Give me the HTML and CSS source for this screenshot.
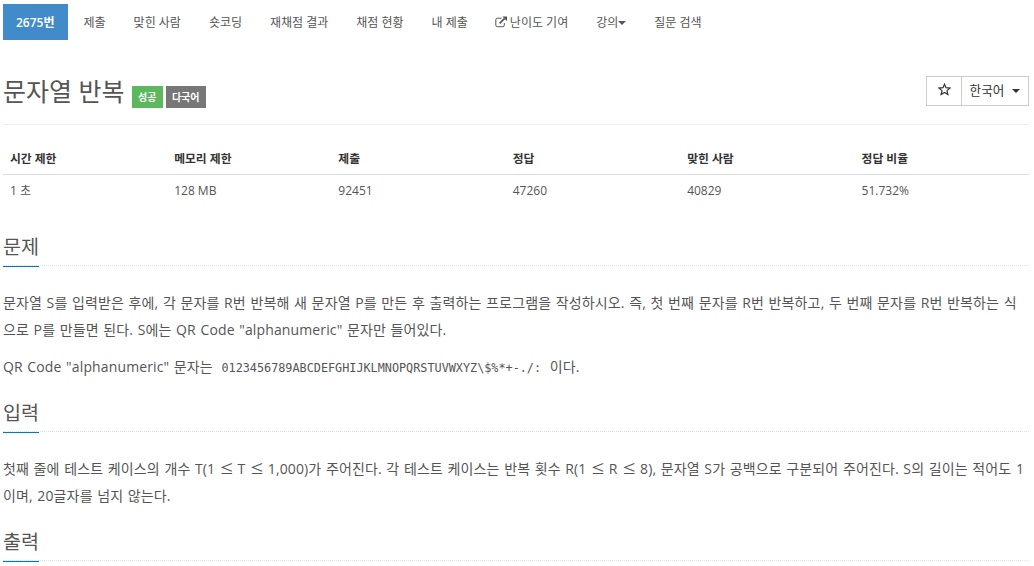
FILE: index.html
```html
<!DOCTYPE html>
<html lang="ko">
<head>
    <meta charset="UTF-8">
    <meta name="viewport" content="width=device-width, initial-scale=1.0">
    <title>2675번: 문자열 반복</title>
    <link rel="stylesheet" href="styles.css">
</head>
<body>
    <ul class="problem-menu">
        <li class="active"><a href="#">2675번</a></li>
        <li><a href="#">제출</a></li>
        <li><a href="#">맞힌 사람</a></li>
        <li><a href="#">숏코딩</a></li>
        <li><a href="#">재채점 결과</a></li>
        <li><a href="#">채점 현황</a></li>
        <li><a href="#">내 제출</a></li>
        <li>
            <a href="#">
                <svg class="icon-link" viewBox="0 0 12 12" width="12" height="12">
                    <path d="M6.500 2.200H2.300Q.8 2.200.8 3.700v5.500q0 1.500 1.500 1.500h5.500q1.500 0 1.500-1.500V7" fill="none" stroke="currentColor"/>
                    <path d="M4.600 7.400L9.600 2.400" fill="none" stroke="currentColor" stroke-width="1.600"/>
                    <path d="M7.400.6H12v4.600z" fill="currentColor"/>
                </svg>
                난이도 기여
            </a>
        </li>
        <li><a href="#">강의<span class="caret"></span></a></li>
        <li><a href="#">질문 검색</a></li>
    </ul>

    <div class="page-header">
        <h1>문자열 반복</h1>
        <span class="tag success">성공</span>
        <span class="tag lang">다국어</span>
        <div class="btn-group">
            <button type="button" class="star">
                <svg viewBox="0 0 13 13" width="13" height="13">
                    <path d="M6.500 1.200l1.500 3.500 3.900.4-2.900 2.500.9 3.900-3.400-2.100-3.400 2.100.9-3.900L1.100 5.100l3.900-.4z" fill="none" stroke="currentColor" stroke-width="1.200"/>
                </svg>
            </button>
            <button type="button" class="language">한국어<span class="caret"></span></button>
        </div>
    </div>

    <table class="problem-info">
        <thead>
            <tr>
                <th class="limit">시간 제한</th>
                <th class="limit">메모리 제한</th>
                <th>제출</th>
                <th>정답</th>
                <th>맞힌 사람</th>
                <th>정답 비율</th>
            </tr>
        </thead>
        <tbody>
            <tr>
                <td>1 초</td>
                <td>128 MB</td>
                <td>92451</td>
                <td>47260</td>
                <td>40829</td>
                <td>51.732%</td>
            </tr>
        </tbody>
    </table>

    <section>
        <div class="headline"><h2>문제</h2></div>
        <p>문자열 S를 입력받은 후에, 각 문자를 R번 반복해 새 문자열 P를 만든 후 출력하는 프로그램을 작성하시오. 즉, 첫 번째 문자를 R번 반복하고, 두 번째 문자를 R번 반복하는 식<br>으로 P를 만들면 된다. S에는 QR Code "alphanumeric" 문자만 들어있다.</p>
        <p>QR Code "alphanumeric" 문자는 <code>0123456789ABCDEFGHIJKLMNOPQRSTUVWXYZ\$%*+-./:</code> 이다.</p>
    </section>

    <section>
        <div class="headline"><h2>입력</h2></div>
        <p>첫째 줄에 테스트 케이스의 개수 T(1 <span class="le">≤</span> T <span class="le">≤</span> 1,000)가 주어진다. 각 테스트 케이스는 반복 횟수 R(1 <span class="le">≤</span> R <span class="le">≤</span> 8), 문자열 S가 공백으로 구분되어 주어진다. S의 길이는 적어도 1<br>이며, 20글자를 넘지 않는다.</p>
    </section>

    <section>
        <div class="headline"><h2>출력</h2></div>
    </section>
</body>
</html>
```

FILE: styles.css
```css
* {
    box-sizing: border-box;
}
body {
    margin: 0;
    padding: 4px 5px 0 3px;
    height: 566px;
    overflow: hidden;
    background-color: #fff;
    color: #555;
    font-family: "Open Sans", "Noto Sans CJK KR", sans-serif;
    font-size: 12px;
}
.problem-menu {
    display: flex;
    gap: 2px;
    margin: 0;
    padding: 0;
    list-style: none;
}
.problem-menu a {
    display: flex;
    align-items: center;
    height: 36px;
    padding: 0 13px;
    color: #555;
    text-decoration: none;
    white-space: nowrap;
}
.problem-menu .active {
    margin-right: 1px;
}
.problem-menu .active a {
    background-color: #428bca;
    color: #fff;
    font-weight: 600;
}
.icon-link {
    margin: 0 3px 0 -1px;
}
.caret {
    display: inline-block;
    border-top: 4px solid currentColor;
    border-left: 4px solid transparent;
    border-right: 4px solid transparent;
}
.problem-menu .caret {
    margin-top: 2px;
}
.page-header {
    display: flex;
    align-items: flex-end;
    height: 85px;
    padding-bottom: 16px;
    border-bottom: 1px solid #eee;
}
h1 {
    margin: 0 7px 0 0;
    font-size: 25px;
    font-weight: 400;
    line-height: 34px;
    color: #555;
}
.tag {
    height: 22px;
    margin-right: 3px;
    padding: 0 6px;
    color: #fff;
    font-size: 10px;
    font-weight: 700;
    line-height: 22px;
}
.success {
    padding: 0 6.5px;
    background-color: #5cb85c;
}
.lang {
    background-color: #777;
}
.btn-group {
    display: flex;
    margin-left: auto;
    margin-bottom: 2px;
}
.btn-group button {
    display: flex;
    align-items: center;
    justify-content: center;
    height: 30px;
    padding: 0 0 3px;
    border: 1px solid #ccc;
    background-color: #fff;
    color: #333;
    font-family: inherit;
    font-size: 12.6px;
}
.btn-group .star {
    width: 36px;
}
.btn-group .language {
    width: 68px;
    margin-left: -1px;
}
.language .caret {
    margin: 3px 0 0 8px;
}
.problem-info {
    width: 100%;
    margin-top: 18px;
    border-collapse: collapse;
    table-layout: fixed;
}
.problem-info th,
.problem-info td {
    height: 32px;
    padding: 0 7px;
    text-align: left;
}
.problem-info th {
    width: 17%;
    height: 31px;
    padding-bottom: 2px;
    border-bottom: 1px solid #ddd;
    color: #333;
    font-size: 11.8px;
    font-weight: 700;
}
.problem-info .limit {
    width: 16%;
}
.headline {
    height: 38px;
    margin-bottom: 23px;
    border-bottom: 1px dotted #dde3ea;
}
.problem-info + section {
    margin-top: 22px;
}
section {
    margin-bottom: 14px;
}
h2 {
    display: inline-block;
    height: 39px;
    margin: 0;
    border-bottom: 1px solid #0078be;
    color: #555;
    font-size: 19.6px;
    font-weight: 400;
    line-height: 38px;
}
p {
    margin: 0 0 10px;
    font-size: 14px;
    line-height: 27px;
    letter-spacing: 0.13px;
    word-spacing: 0.8px;
    white-space: nowrap;
}
section p:last-child {
    margin-bottom: 0;
}
.le {
    margin-right: -0.9px;
    font-family: "Noto Sans CJK KR", sans-serif;
    line-height: 1;
}
code {
    padding: 0 4px;
    font-family: "DejaVu Sans Mono", monospace;
    font-size: 11.8px;
    letter-spacing: 0;
    line-height: 1;
}
```
